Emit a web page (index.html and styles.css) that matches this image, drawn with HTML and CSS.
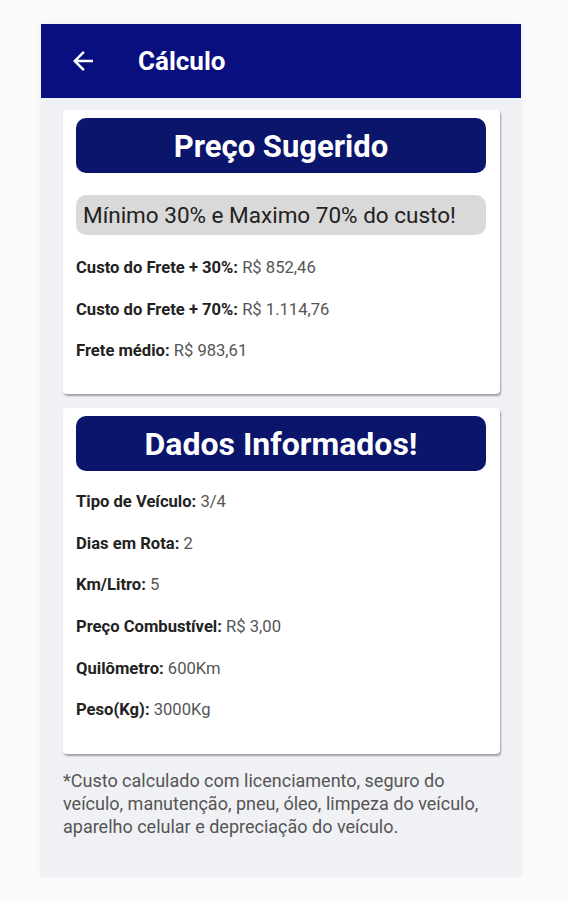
FILE: index.html
```html
<!DOCTYPE html>
<html lang="pt-BR">
<head>
  <meta charset="UTF-8">
  <meta name="viewport" content="width=device-width, initial-scale=1.0">
  <title>Cálculo</title>
  <link rel="stylesheet" href="styles.css">
</head>
<body>
  <div class="app">
    <header class="topbar">
      <svg class="back" viewBox="0 0 24 24" width="30" height="30"><path fill="#fff" d="M20 11H7.83l5.59-5.59L12 4l-8 8 8 8 1.41-1.41L7.83 13H20v-2z"/></svg>
      <h1>Cálculo</h1>
    </header>

    <div class="content">
      <div class="card">
        <h2 class="card-title">Preço Sugerido</h2>
        <p class="note">Mínimo 30% e Maximo 70% do custo!</p>
        <div class="rows first">
          <p><strong>Custo do Frete + 30%:</strong> R$ 852,46</p>
          <p><strong>Custo do Frete + 70%:</strong> R$ 1.114,76</p>
          <p><strong>Frete médio:</strong> R$ 983,61</p>
        </div>
      </div>

      <div class="card second">
        <h2 class="card-title">Dados Informados!</h2>
        <div class="rows">
          <p><strong>Tipo de Veículo:</strong> 3/4</p>
          <p><strong>Dias em Rota:</strong> 2</p>
          <p><strong>Km/Litro:</strong> 5</p>
          <p><strong>Preço Combustível:</strong> R$ 3,00</p>
          <p><strong>Quilômetro:</strong> 600Km</p>
          <p><strong>Peso(Kg):</strong> 3000Kg</p>
        </div>
      </div>

      <p class="footnote">*Custo calculado com licenciamento, seguro do veículo, manutenção, pneu, óleo, limpeza do veículo, aparelho celular e depreciação do veículo.</p>
    </div>
  </div>
</body>
</html>
```

FILE: styles.css
```css
body {
  margin: 0;
  background: #fafafa;
  font-family: Roboto, "Liberation Sans", sans-serif;
}
.app {
  margin: 24px 0 0 41px;
  width: 480px;
  height: 853px;
  background: #eff1f4;
  box-shadow: 0 0 6px rgba(0, 0, 0, 0.06);
}
.topbar {
  height: 74px;
  background: #0a0f80;
  display: flex;
  align-items: center;
  padding-left: 27px;
}
.back {
  display: block;
}
.topbar h1 {
  margin: 0 0 0 40px;
  color: #fff;
  font-size: 26px;
  font-weight: 700;
}
.content {
  padding: 12px 21px 0 22px;
}
.card {
  background: #fff;
  border-radius: 4px;
  padding: 8px 14px 0 13px;
  box-shadow: 1px 2px 2px rgba(0, 0, 0, 0.35);
}
.card.second {
  margin-top: 14px;
}
.card-title {
  margin: 0;
  height: 55px;
  line-height: 57px;
  background: #0b156b;
  border-radius: 10px;
  color: #fff;
  text-align: center;
  font-size: 31px;
  font-weight: 700;
}
.second .card-title {
  font-size: 32px;
}
.note {
  margin: 22px 0 0;
  height: 40px;
  line-height: 40px;
  padding-left: 7px;
  background: #d9d9d9;
  border-radius: 10px;
  font-size: 22.5px;
  color: #222;
}
.rows {
  padding: 21px 0 35px;
}
.rows.first {
  padding-top: 23px;
  padding-bottom: 34px;
}
.rows p {
  margin: 0 0 22.6px;
  line-height: 19px;
  font-size: 16.6px;
  color: #555;
}
.rows p:last-child {
  margin-bottom: 0;
}
.rows strong {
  color: #222;
}
.footnote {
  margin: 15px 0 0;
  font-size: 18px;
  line-height: 23px;
  color: #555;
}
```
